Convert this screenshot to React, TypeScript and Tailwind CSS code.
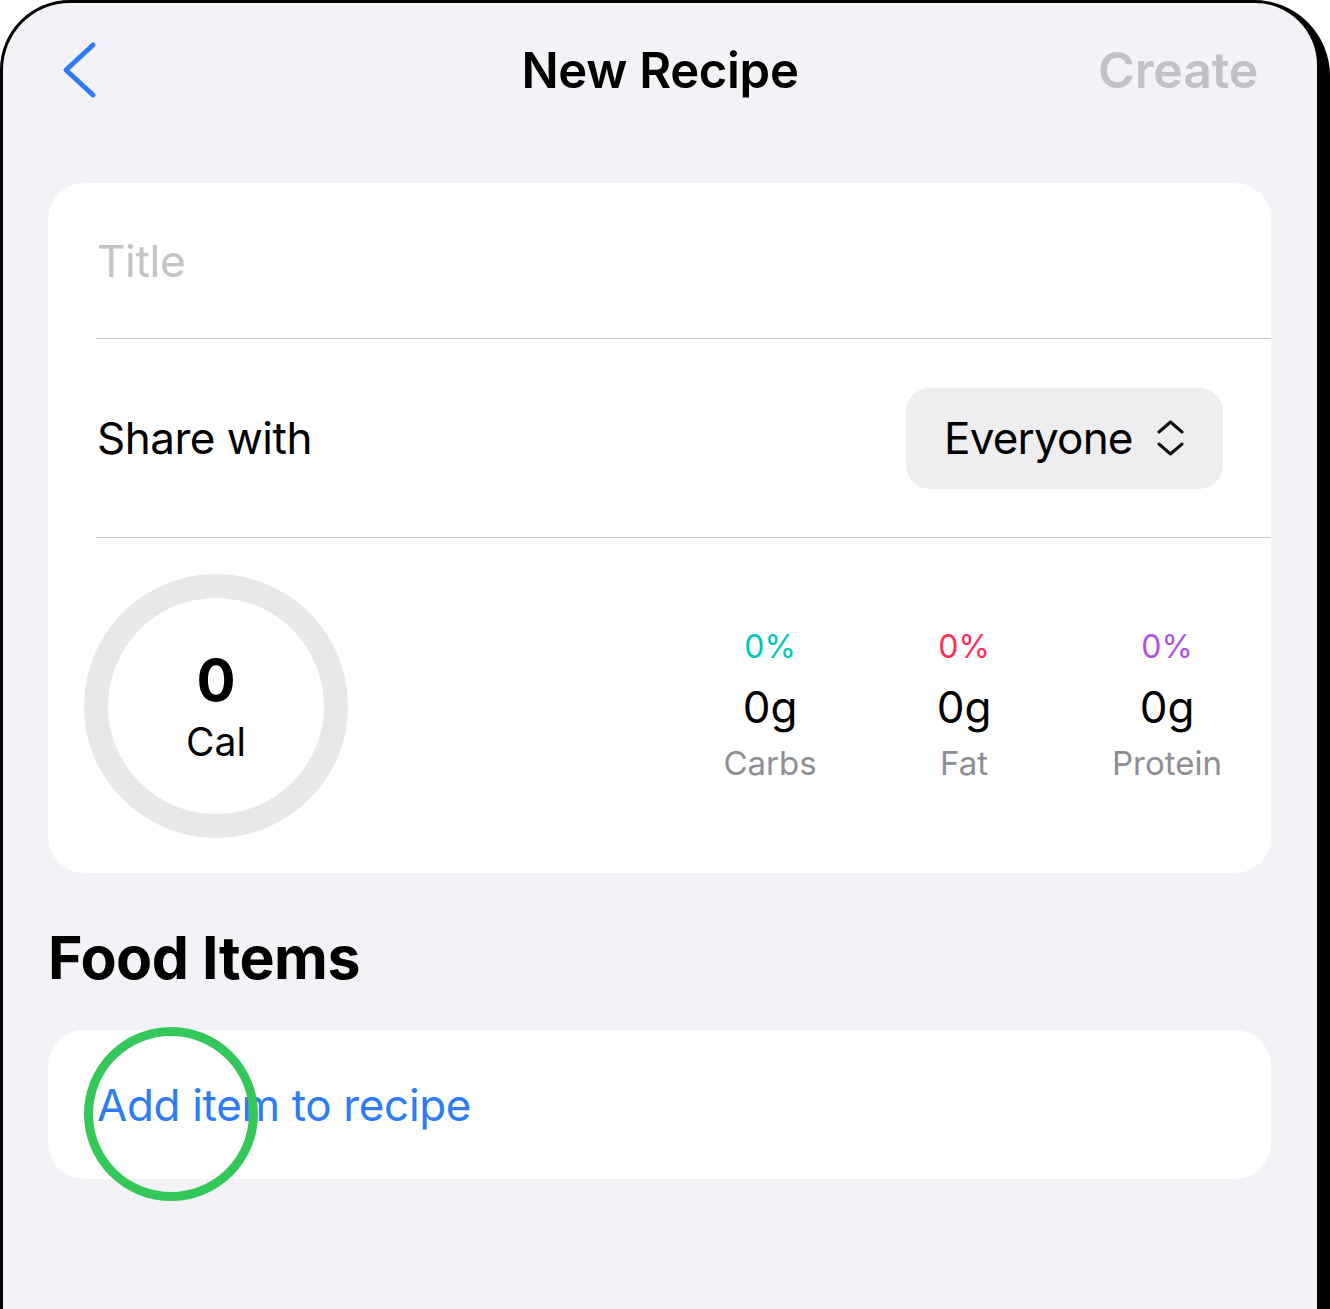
import React from 'react';

const font = { fontFamily: 'Inter, "Noto Sans", sans-serif' };

function BackChevron() {
  return (
    <svg width="38" height="58" viewBox="0 0 38 58" fill="none">
      <path d="M32 4 L5 29 L32 54" stroke="#2f7bf6" strokeWidth="5" strokeLinecap="round" strokeLinejoin="round" />
    </svg>
  );
}

function UpDown() {
  return (
    <svg width="28" height="36" viewBox="0 0 28 36" fill="none">
      <path d="M2 12 L13.5 2 L25 12" stroke="#111" strokeWidth="3" strokeLinecap="round" strokeLinejoin="round" />
      <path d="M2 24 L13.5 34 L25 24" stroke="#111" strokeWidth="3" strokeLinecap="round" strokeLinejoin="round" />
    </svg>
  );
}

function Macro({ pct, color, label, className }: { pct: string; color: string; label: string; className?: string }) {
  return (
    <div className={`w-[120px] flex flex-col items-center ${className ?? ''}`}>
      <span className={`text-[32px] leading-none ${color}`}>{pct}</span>
      <span className="mt-[22px] text-[44px] leading-none text-black">0g</span>
      <span className="mt-[18px] text-[33px] leading-none text-[#8e8e93]">{label}</span>
    </div>
  );
}

export default function App() {
  return (
    <div className="w-[1330px] h-[1309px] bg-white overflow-hidden" style={font}>
      <div className="h-full bg-black rounded-tl-[70px] rounded-tr-[76px] pl-[3px] pt-[3px] pr-[13px]">
        <div className="h-full bg-[#f2f2f7] rounded-tl-[67px] rounded-tr-[62px] flex flex-col">
          {/* nav bar */}
          <div className="h-[134px] grid grid-cols-[1fr_auto_1fr] items-center">
            <div className="pl-[58px] flex items-center">
              <BackChevron />
            </div>
            <h1 className="text-[49px] leading-none font-semibold text-black tracking-[-0.3px]">New Recipe</h1>
            <div className="pr-[59px] flex justify-end">
              <span className="text-[50px] leading-none font-semibold text-[#c2c2c6] tracking-[-0.2px]">Create</span>
            </div>
          </div>

          <div className="px-[45px] pr-[46px] mt-[46px]">
            {/* recipe card */}
            <div className="bg-white rounded-[36px]">
              <div className="h-[155px] flex items-center pl-[49px]">
                <span className="text-[44px] leading-none text-[#c4c4c7] tracking-[-0.3px]">Title</span>
              </div>
              <div className="ml-[48px] h-px bg-[#c6c6c8]" />
              <div className="h-[198px] flex items-center justify-between pl-[49px] pr-[48px]">
                <span className="text-[44px] leading-none text-black tracking-[-0.5px]">Share with</span>
                <button className="w-[317px] h-[101px] rounded-[24px] bg-[#eeeef0] pl-[38px] pr-[38px] flex items-center justify-between">
                  <span className="text-[44px] leading-none text-black tracking-[-0.8px]">Everyone</span>
                  <UpDown />
                </button>
              </div>
              <div className="ml-[48px] h-px bg-[#c6c6c8]" />
              <div className="h-[335px] flex items-center pl-[36px] pr-[44px]">
                <div className="w-[264px] h-[264px] rounded-full border-[24px] border-[#e8e8eb] flex flex-col items-center justify-center">
                  <span className="text-[58px] leading-none font-bold text-black">0</span>
                  <span className="mt-[13px] text-[39px] leading-none text-black">Cal</span>
                </div>
                <div className="ml-auto flex items-center">
                  <Macro pct="0%" color="text-[#00c7be]" label="Carbs" />
                  <Macro pct="0%" color="text-[#ff2d55]" label="Fat" className="ml-[74px]" />
                  <Macro pct="0%" color="text-[#af52de]" label="Protein" className="ml-[83px]" />
                </div>
              </div>
            </div>

            {/* food items */}
            <div className="h-[157px] pt-[11px] flex items-center">
              <h2 className="text-[59px] leading-none font-bold text-black tracking-[-0.5px]">Food Items</h2>
            </div>
            <div className="relative bg-white rounded-[36px] h-[149px] flex items-center pl-[49px]">
              <span className="text-[44px] leading-none text-[#2f7bf6] tracking-[-0.35px]">Add item to recipe</span>
              <div className="absolute left-[36px] top-[-3px] w-[174px] h-[174px] rounded-full border-[9px] border-[#34c759]" />
            </div>
          </div>
        </div>
      </div>
    </div>
  );
}
